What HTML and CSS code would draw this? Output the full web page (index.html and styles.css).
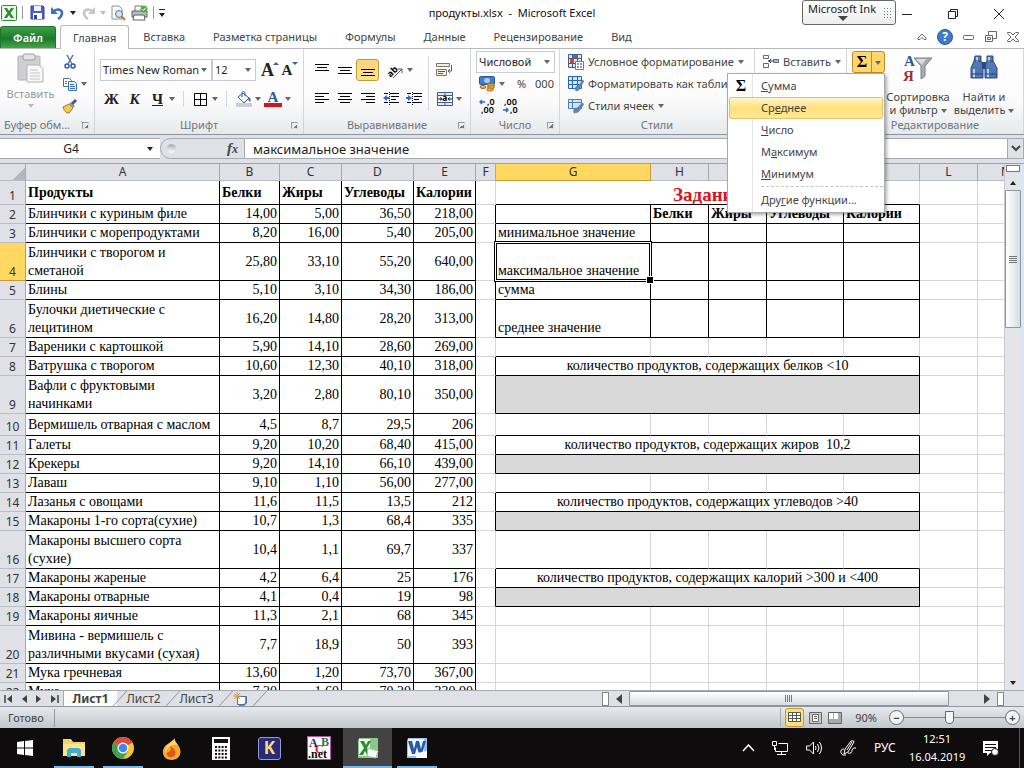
FILE: index.html
```html
<!DOCTYPE html>
<html lang="ru">
<head>
    <meta charset="UTF-8">
    <meta name="viewport" content="width=device-width, initial-scale=1.0">
    <title>продукты.xlsx - Microsoft Excel</title>
    <link rel="stylesheet" href="styles.css">
</head>
<body>
    <header class="titlebar">
        <div class="quick">
            <svg width="16" height="16" viewBox="0 0 16 16"><rect x=".5" y=".5" width="15" height="15" rx="1" fill="#eaf6e4" stroke="#2f8a36"/><path d="M3 3h3l2 3 2-3h3L9.600 8l3.400 5h-3L8 10l-2 3H3l3.400-5z" fill="#2f8a36"/></svg>
            <span class="sep"></span>
            <button class="qb" aria-label="Сохранить"><svg width="15" height="15" viewBox="0 0 15 15"><path d="M1 1h12l1 1v12H1z" fill="#4a5fc4" stroke="#3443a0"/><rect x="4" y="1" width="7" height="5" fill="#eef1fb"/><rect x="3" y="8" width="9" height="6" fill="#fff"/><rect x="4" y="10" width="3" height="4" fill="#3443a0"/></svg></button>
            <button class="qb" aria-label="Отменить"><svg width="14" height="14" viewBox="0 0 14 14"><path d="M3 5c4-3 8-1 8 2 0 2-1 4-4 6" fill="none" stroke="#3f6fc0" stroke-width="2.500"/><path d="M0 1v7h7z" fill="#3f6fc0"/></svg></button>
            <span class="tri dark"></span>
            <button class="qb" aria-label="Вернуть"><svg width="14" height="14" viewBox="0 0 14 14"><path d="M11 5C7 2 3 4 3 7c0 2 1 4 4 6" fill="none" stroke="#c3c6cb" stroke-width="2.500"/><path d="M14 1v7H7z" fill="#c3c6cb"/></svg></button>
            <span class="tri pale"></span>
            <button class="qb" aria-label="Просмотр"><svg width="16" height="16" viewBox="0 0 16 16"><path d="M2 1h7l3 3v10H2z" fill="#fff" stroke="#8b93a0"/><circle cx="9" cy="9" r="3.500" fill="#cfe4f7" stroke="#56718f"/><path d="M11.500 11.500L15 15" stroke="#b5763a" stroke-width="2"/></svg></button>
            <button class="qb" aria-label="Печать"><svg width="17" height="16" viewBox="0 0 17 16"><path d="M4 1h7v6H4z" fill="#fff" stroke="#777"/><path d="M1 6h15v6H1z" fill="#b9bdc3" stroke="#5d6269"/><path d="M3 10h10l1 5H2z" fill="#fff" stroke="#5d6269"/><circle cx="13" cy="4" r="3.500" fill="#58a848"/><path d="M11 4l1.500 1.500L15 2.500" fill="none" stroke="#fff"/></svg></button>
            <span class="sep"></span>
            <button class="custom" aria-label="Настройка панели"><span class="tri dark"></span></button>
        </div>
        <h1 class="title">продукты.xlsx &nbsp;- &nbsp;Microsoft Excel</h1>
        <div class="window-buttons">
            <button aria-label="Свернуть"><svg width="12" height="12"><path d="M1 6.500h10" stroke="#222"/></svg></button>
            <button aria-label="Восстановить"><svg width="12" height="12" fill="none" stroke="#222"><path d="M1.500 3.500h7v7h-7zM3.500 3.500v-2h7v7h-2"/></svg></button>
            <button aria-label="Закрыть"><svg width="12" height="12"><path d="M1 1l10 10M11 1L1 11" stroke="#222"/></svg></button>
        </div>
        <button class="ink">Microsoft Ink<span class="ink-arrow"></span><span class="ink-dots"></span></button>
    </header>

    <nav class="tabs">
        <button class="file">Файл</button>
        <button class="tab active">Главная</button>
        <button class="tab">Вставка</button>
        <button class="tab">Разметка страницы</button>
        <button class="tab">Формулы</button>
        <button class="tab">Данные</button>
        <button class="tab">Рецензирование</button>
        <button class="tab">Вид</button>
        <div class="tab-tools">
            <button aria-label="Свернуть ленту"><svg width="10" height="8" fill="none" stroke="#666"><path d="M1 5l4-4 4 4v1.500H7L5 4.500 3 6.500H1z"/></svg></button>
            <button aria-label="Справка"><svg width="16" height="16"><circle cx="8" cy="8" r="7.500" fill="#3f78cf" stroke="#2b5ba6"/><text x="8" y="12" text-anchor="middle" class="help">?</text></svg></button>
            <button aria-label="Свернуть книгу"><svg width="12" height="8" fill="none" stroke="#666"><rect x=".5" y="2.500" width="10" height="4" rx="1"/></svg></button>
            <button aria-label="Восстановить книгу"><svg width="12" height="12" fill="#fff" stroke="#666"><path d="M3.500.5h8v7h-8z"/><path d="M.5 4.500h7v6h-7z"/><path d="M2.500 6.500h3v2h-3z"/></svg></button>
            <button aria-label="Закрыть книгу"><svg width="12" height="10" fill="none" stroke="#666"><path d="M.5.5h3L6 3 8.500.5h3v1L8 5l3.500 3.500v1h-3L6 7 3.500 9.500h-3v-1L4 5 .5 1.500z"/></svg></button>
        </div>
    </nav>

    <section class="ribbon">
        <div class="group clipboard">
            <div class="content">
                <button class="big disabled"><svg width="28" height="30" viewBox="0 0 28 30"><rect x="1" y="3" width="22" height="24" rx="1" fill="#cfcfd1" stroke="#b4b4b6"/><rect x="6" y="1" width="12" height="6" rx="2" fill="#e4e4e5" stroke="#9c9c9e"/><path d="M10 12h12l4 4v13H10z" fill="#f7f7f8" stroke="#b4b4b6"/><path d="M13 17h8M13 20h10M13 23h10M13 26h10" stroke="#c8c8ca"/></svg><span>Вставить</span><span class="tri pale"></span></button>
                <div class="stack">
                    <button class="ib" aria-label="Вырезать"><svg width="12" height="16" fill="none"><path d="M3 1l5 9M9 1L4 10" stroke="#56779f" stroke-width="1.500"/><circle cx="3" cy="12" r="2" stroke="#2b57b5" stroke-width="1.500"/><circle cx="9" cy="12" r="2" stroke="#2b57b5" stroke-width="1.500"/></svg></button>
                    <div class="line"><button class="ib" aria-label="Копировать"><svg width="16" height="14" stroke="#3d6fb5"><path d="M1.500 1.500h6l2 2v6h-8z" fill="#fff"/><path d="M6.500 4.500h6l2 2v7h-8z" fill="#e3eefb"/><path d="M8 7.500h4M8 9.500h5M8 11.500h5M3 4.500h2M3 6.500h2"/></svg></button><span class="tri"></span></div>
                    <button class="ib" aria-label="Формат по образцу"><svg width="16" height="15"><path d="M1 8l6-3 4 4-4 5c-3 0-5-2-6-6z" fill="#f3c84b" stroke="#a07a20"/><path d="M7 5l2-2 4 4-2 2z" fill="#8f99ab"/><path d="M10 5l4-4" stroke="#3f5e93" stroke-width="3"/></svg></button>
                </div>
            </div>
            <div class="label">Буфер обм...<i class="launch"></i></div>
        </div>

        <div class="group font">
            <div class="content rows">
                <div class="line">
                    <label class="combo family"><select aria-label="Шрифт"><option>Times New Roman</option></select></label>
                    <label class="combo size"><select aria-label="Размер"><option>12</option></select></label>
                    <button class="ib letter grow" aria-label="Увеличить шрифт">A<span class="up"></span></button>
                    <button class="ib letter shrink" aria-label="Уменьшить шрифт">A<span class="down"></span></button>
                </div>
                <div class="line">
                    <button class="ib letter">Ж</button>
                    <button class="ib letter italic">К</button>
                    <button class="ib letter under">Ч</button><span class="tri"></span>
                    <span class="vsep"></span>
                    <button class="ib" aria-label="Границы"><svg width="13" height="13" fill="none" stroke="#000"><path d="M.5.5h12v12H.5zM6.500.5v12M.5 6.500h12"/></svg></button><span class="tri"></span>
                    <span class="vsep"></span>
                    <button class="ib fill" aria-label="Заливка"><svg width="16" height="16"><path d="M2 6l5-4 6 5-5 5z" fill="#eef3fb" stroke="#3f5e93"/><path d="M6 6V2c0-2 3-2 3 0v3" fill="none" stroke="#3f5e93"/><path d="M12 6c3 1 3 3 2 5-1-1-2-2-2-5z" fill="#2f5fb0"/><rect y="12" width="16" height="4" fill="#ccd0d6"/></svg></button><span class="tri"></span>
                    <button class="ib color" aria-label="Цвет текста">A</button><span class="tri"></span>
                </div>
            </div>
            <div class="label">Шрифт<i class="launch"></i></div>
        </div>

        <div class="group align">
            <div class="content">
                <div class="rows">
                    <div class="line">
                        <button class="ib" aria-label="По верхнему краю"><svg width="14" height="14" stroke="#000"><path d="M0 1.500h14M2 4.500h10M0 7.500h14"/></svg></button>
                        <button class="ib" aria-label="По середине"><svg width="14" height="14" stroke="#000"><path d="M0 4.500h14M2 7.500h10M0 10.500h14"/></svg></button>
                        <button class="ib on" aria-label="По нижнему краю"><svg width="14" height="14" stroke="#000"><path d="M0 6.500h14M2 9.500h10M0 12.500h14"/></svg></button>
                        <button class="ib orient" aria-label="Ориентация"><svg width="18" height="17"><text x="0" y="13" transform="rotate(-45 5 10)" class="ab">ab</text><path d="M6 16l9-9M11 7h4v4" fill="none" stroke="#555"/></svg></button><span class="tri"></span>
                    </div>
                    <div class="line">
                        <button class="ib" aria-label="По левому краю"><svg width="14" height="14" stroke="#000"><path d="M0 1.500h14M0 4.500h9M0 7.500h14M0 10.500h9"/></svg></button>
                        <button class="ib" aria-label="По центру"><svg width="14" height="14" stroke="#000"><path d="M0 1.500h14M2 4.500h10M0 7.500h14M2 10.500h10"/></svg></button>
                        <button class="ib" aria-label="По правому краю"><svg width="14" height="14" stroke="#000"><path d="M0 1.500h14M5 4.500h9M0 7.500h14M5 10.500h9"/></svg></button>
                        <button class="ib" aria-label="Уменьшить отступ"><svg width="16" height="14" stroke="#000"><path d="M1 1.500h4M7 1.500h9M8 4.500h8M8 7.500h5M1 10.500h4M7 10.500h9"/><path d="M6.500 0v13" stroke-dasharray="1 1"/><path d="M0 6l4-3v2h2v2H4v2z" fill="#2f6bd0" stroke="none"/></svg></button>
                        <button class="ib" aria-label="Увеличить отступ"><svg width="16" height="14" stroke="#000"><path d="M1 1.500h4M7 1.500h9M8 4.500h8M8 7.500h5M1 10.500h4M7 10.500h9"/><path d="M6.500 0v13" stroke-dasharray="1 1"/><path d="M6 6L2 3v2H0v2h2v2z" fill="#2f6bd0" stroke="none"/></svg></button>
                    </div>
                </div>
                <span class="vsep tall"></span>
                <div class="rows">
                    <button class="ib" aria-label="Перенос текста"><svg width="17" height="16"><path d="M.5 1.500h13v3H.5zM.5 7.500h10v6H.5z" fill="#f3f0dc" stroke="#777"/><path d="M2 9.500h7M2 11.500h5" stroke="#4b6078"/><path d="M15.500 3v6h-3M14 7l-2 2 2 2" fill="none" stroke="#4b6078"/></svg></button>
                    <div class="line"><button class="ib" aria-label="Объединить"><svg width="16" height="15"><path d="M.5.5h15v13H.5z" fill="#dfeaf7" stroke="#3f5e93"/><path d="M1 4h14v6H1z" fill="#fff"/><path d="M.5 3.500h15M.5 10.500h15M8 .5v3M8 10.500v3" stroke="#3f5e93"/><path d="M1 7h4M11 7h4M3 5.500L5 7 3 8.500M13 5.500L11 7l2 1.500" fill="none" stroke="#222"/><text x="5" y="9" class="ab">a</text></svg></button><span class="tri"></span></div>
                </div>
            </div>
            <div class="label">Выравнивание<i class="launch"></i></div>
        </div>

        <div class="group number">
            <div class="content stack">
                <label class="combo format"><select aria-label="Числовой формат"><option>Числовой</option></select></label>
                <div class="line">
                    <button class="ib" aria-label="Денежный формат"><svg width="17" height="16"><rect x=".5" y=".5" width="15" height="8" rx="1" fill="#3f7cc9" stroke="#28559b"/><ellipse cx="8" cy="4.500" rx="3" ry="2.500" fill="#a9cdf3"/><g fill="#f0b440" stroke="#a96b16"><ellipse cx="12" cy="9" rx="3.500" ry="1.500"/><ellipse cx="12" cy="11" rx="3.500" ry="1.500"/><ellipse cx="11" cy="13.500" rx="3.500" ry="1.500"/><ellipse cx="4" cy="11" rx="3" ry="1.500"/></g></svg></button><span class="tri"></span>
                    <button class="ib percent">%</button>
                    <button class="ib">000</button>
                </div>
                <div class="line">
                    <button class="ib digits" aria-label="Увеличить разрядность"><svg width="17" height="16"><path d="M1 4h5M3 2L1 4l2 2" stroke="#2f6bd0" fill="none" stroke-width="1.500"/><text x="8" y="7">,0</text><text x="2" y="15">,00</text></svg></button>
                    <button class="ib digits" aria-label="Уменьшить разрядность"><svg width="17" height="16"><text x="2" y="7">,00</text><path d="M1 12h5M4 10l2 2-2 2" stroke="#2f6bd0" fill="none" stroke-width="1.500"/><text x="8" y="15">,0</text></svg></button>
                </div>
            </div>
            <div class="label">Число<i class="launch"></i></div>
        </div>

        <div class="group styles">
            <div class="content stack">
                <button class="row-button"><svg width="16" height="16"><path d="M.5.5h13v13H.5z" fill="#d9e6f6" stroke="#3f5e93"/><path d="M.5 4.500h13M.5 9.500h13M4.500.5v13M9.500.5v13" stroke="#3f5e93"/><path d="M5 1h4v3H5zM2 5h4v4H2z" fill="#cf4436"/><path d="M7.500 7.500h8v8h-8z" fill="#fff" stroke="#777"/><path d="M9 10h2M12 10h2M9 13h2M12 13h2" stroke="#333"/></svg><span>Условное форматирование</span><i class="tri"></i></button>
                <button class="row-button"><svg width="16" height="16"><path d="M.5.5h13v12H.5z" fill="#d3e5fa" stroke="#2f62ad"/><path d="M.5 4.500h13M.5 8.500h13M4.500.5v12M9.500.5v12" stroke="#2f62ad"/><path d="M8 15c-2-3 0-5 2-5l5-6 1 1-4 7c0 2-2 3-4 3z" fill="#4f87d2" stroke="#8b7840" stroke-width=".5"/></svg><span>Форматировать как таблицу</span></button>
                <button class="row-button"><svg width="16" height="16"><path d="M.5 1.500h13v9H.5z" fill="#d3e5fa" stroke="#4f7cb8"/><path d="M.5 4.500h13M4.500 1.500v9" stroke="#4f7cb8"/><path d="M6 15c-1-3 0-5 3-5l5-5 2 1-4 6c-1 2-3 3-6 3z" fill="#4f87d2" stroke="#8b7840" stroke-width=".5"/></svg><span>Стили ячеек</span><i class="tri"></i></button>
            </div>
            <div class="label">Стили</div>
        </div>

        <div class="group cells">
            <div class="content stack">
                <button class="row-button"><svg width="16" height="14" fill="#fff" stroke="#667"><path d="M.5.500h5v3h-5zM.5 8.500h5v4h-5z"/><path d="M10.500 4.500h5v3h-5z" fill="#9cc0ec"/><path d="M5 6h5M8 4L6 6l2 2" stroke="#222"/></svg><span>Вставить</span><i class="tri"></i></button>
            </div>
            <div class="label"></div>
        </div>

        <div class="group editing">
            <div class="content">
                <div class="autosum">
                    <button class="sum">Σ</button><button class="sum-arrow" aria-label="Другие функции"><i class="tri"></i></button>
                    <div class="menu" role="menu">
                        <button role="menuitem"><b>Σ</b><span><u>С</u>умма</span></button>
                        <button role="menuitem" class="hover"><b></b><span>Ср<u>е</u>днее</span></button>
                        <button role="menuitem"><b></b><span><u>Ч</u>исло</span></button>
                        <button role="menuitem"><b></b><span>М<u>а</u>ксимум</span></button>
                        <button role="menuitem"><b></b><span><u>М</u>инимум</span></button>
                        <hr>
                        <button role="menuitem"><b></b><span>Дру<u>г</u>ие функции...</span></button>
                    </div>
                </div>
                <button class="big"><svg width="30" height="30"><text x="1" y="13" class="sort-a">A</text><text x="0" y="28" class="sort-ya">Я</text><path d="M11 5h18l-7 8v10l-4 3V13z" fill="#a9adb2" stroke="#7b8087"/><path d="M13 6h10l-4 6z" fill="#d9dce0"/></svg><span>Сортировка<br>и фильтр <i class="tri"></i></span></button>
                <button class="big"><svg width="28" height="30"><g fill="#5377b5" stroke="#2c4a84"><path d="M5 3h6v5l2 5v12H1V15l3-7z"/><path d="M17 3h6v5l4 7v10H15V13l2-5z"/></g><path d="M12 9h4v7h-4z" fill="#2c4a84"/><path d="M4 16v8M18 16v8M7 4v5M19 4v5" stroke="#b9d0f2" stroke-width="2"/><path d="M5 8h6M17 8h6M1 21h12M15 21h12" stroke="#24406f"/></svg><span>Найти и<br>выделить <i class="tri"></i></span></button>
            </div>
            <div class="label">Редактирование</div>
        </div>
    </section>

    <div class="formula-bar">
        <input class="name-box" aria-label="Имя" value="G4">
        <span class="name-arrow"><i class="tri dark"></i></span>
        <div class="fx-area"><i class="knob"></i><button class="fx">f<small>x</small></button></div>
        <input class="formula" aria-label="Строка формул" value="максимальное значение">
        <button class="expand" aria-label="Развернуть"><svg width="10" height="8"><path d="M1 1l4 4 4-4" fill="none" stroke="#444" stroke-width="2"/></svg></button>
    </div>

    <main class="workspace">
        <div class="sheet">
            <table class="grid">
                <colgroup><col class="w-num"><col class="w-a"><col class="w-b"><col class="w-c"><col class="w-d"><col class="w-c"><col class="w-f"><col class="w-g"><col class="w-h"><col class="w-h"><col class="w-j"><col class="w-k"><col class="w-h"><col class="w-h"></colgroup>
                <thead>
                    <tr><th class="corner"></th><th>A</th><th>B</th><th>C</th><th>D</th><th>E</th><th>F</th><th class="current">G</th><th>H</th><th>I</th><th>J</th><th>K</th><th>L</th><th>M</th></tr>
                </thead>
                <tbody>
                    <tr class="head first"><th>1</th><td>Продукты</td><td>Белки</td><td>Жиры</td><td>Углеводы</td><td>Калории</td><td></td><td colspan="5" class="task">Задание</td><td></td><td></td></tr>
                    <tr class="boxed names"><th>2</th><td>Блинчики с куриным филе</td><td>14,00</td><td>5,00</td><td>36,50</td><td>218,00</td><td></td><td></td><td>Белки</td><td>Жиры</td><td>Углеводы</td><td>Калории</td><td></td><td></td></tr>
                    <tr class="boxed"><th>3</th><td>Блинчики с морепродуктами</td><td>8,20</td><td>16,00</td><td>5,40</td><td>205,00</td><td></td><td>минимальное значение</td><td></td><td></td><td></td><td></td><td></td><td></td></tr>
                    <tr class="boxed double"><th class="current">4</th><td>Блинчики с творогом и сметаной</td><td>25,80</td><td>33,10</td><td>55,20</td><td>640,00</td><td></td><td class="selected">максимальное значение</td><td></td><td></td><td></td><td></td><td></td><td></td></tr>
                    <tr class="boxed"><th>5</th><td>Блины</td><td>5,10</td><td>3,10</td><td>34,30</td><td>186,00</td><td></td><td>сумма</td><td></td><td></td><td></td><td></td><td></td><td></td></tr>
                    <tr class="boxed double"><th>6</th><td>Булочки диетические с лецитином</td><td>16,20</td><td>14,80</td><td>28,20</td><td>313,00</td><td></td><td>среднее значение</td><td></td><td></td><td></td><td></td><td></td><td></td></tr>
                    <tr class="over"><th>7</th><td>Вареники с картошкой</td><td>5,90</td><td>14,10</td><td>28,60</td><td>269,00</td><td></td><td></td><td></td><td></td><td></td><td></td><td></td><td></td></tr>
                    <tr class="boxed"><th>8</th><td>Ватрушка с творогом</td><td>10,60</td><td>12,30</td><td>40,10</td><td>318,00</td><td></td><td colspan="5" class="question">количество продуктов, содержащих белков &lt;10</td><td></td><td></td></tr>
                    <tr class="boxed double"><th>9</th><td>Вафли с фруктовыми начинками</td><td>3,20</td><td>2,80</td><td>80,10</td><td>350,00</td><td></td><td colspan="5" class="answer"></td><td></td><td></td></tr>
                    <tr class="over roomy"><th>10</th><td>Вермишель отварная с маслом</td><td>4,5</td><td>8,7</td><td>29,5</td><td>206</td><td></td><td></td><td></td><td></td><td></td><td></td><td></td><td></td></tr>
                    <tr class="boxed"><th>11</th><td>Галеты</td><td>9,20</td><td>10,20</td><td>68,40</td><td>415,00</td><td></td><td colspan="5" class="question">количество продуктов, содержащих жиров &nbsp;10,2</td><td></td><td></td></tr>
                    <tr class="boxed"><th>12</th><td>Крекеры</td><td>9,20</td><td>14,10</td><td>66,10</td><td>439,00</td><td></td><td colspan="5" class="answer"></td><td></td><td></td></tr>
                    <tr class="over"><th>13</th><td>Лаваш</td><td>9,10</td><td>1,10</td><td>56,00</td><td>277,00</td><td></td><td></td><td></td><td></td><td></td><td></td><td></td><td></td></tr>
                    <tr class="boxed"><th>14</th><td>Лазанья с овощами</td><td>11,6</td><td>11,5</td><td>13,5</td><td>212</td><td></td><td colspan="5" class="question">количество продуктов, содержащих углеводов &gt;40</td><td></td><td></td></tr>
                    <tr class="boxed"><th>15</th><td>Макароны 1-го сорта(сухие)</td><td>10,7</td><td>1,3</td><td>68,4</td><td>335</td><td></td><td colspan="5" class="answer"></td><td></td><td></td></tr>
                    <tr class="over double"><th>16</th><td>Макароны высшего сорта (сухие)</td><td>10,4</td><td>1,1</td><td>69,7</td><td>337</td><td></td><td></td><td></td><td></td><td></td><td></td><td></td><td></td></tr>
                    <tr class="boxed"><th>17</th><td>Макароны жареные</td><td>4,2</td><td>6,4</td><td>25</td><td>176</td><td></td><td colspan="5" class="question">количество продуктов, содержащих калорий &gt;300 и &lt;400</td><td></td><td></td></tr>
                    <tr class="boxed"><th>18</th><td>Макароны отварные</td><td>4,1</td><td>0,4</td><td>19</td><td>98</td><td></td><td colspan="5" class="answer"></td><td></td><td></td></tr>
                    <tr><th>19</th><td>Макароны яичные</td><td>11,3</td><td>2,1</td><td>68</td><td>345</td><td></td><td></td><td></td><td></td><td></td><td></td><td></td><td></td></tr>
                    <tr class="double"><th>20</th><td>Мивина - вермишель с различными вкусами (сухая)</td><td>7,7</td><td>18,9</td><td>50</td><td>393</td><td></td><td></td><td></td><td></td><td></td><td></td><td></td><td></td></tr>
                    <tr><th>21</th><td>Мука гречневая</td><td>13,60</td><td>1,20</td><td>73,70</td><td>367,00</td><td></td><td></td><td></td><td></td><td></td><td></td><td></td><td></td></tr>
                    <tr><th>22</th><td>Мука</td><td>7,20</td><td>1,60</td><td>70,20</td><td>330,00</td><td></td><td></td><td></td><td></td><td></td><td></td><td></td><td></td></tr>
                </tbody>
            </table>
        </div>
        <div class="vscroll">
            <span class="splitter"></span>
            <button class="vs-arrow" aria-label="Вверх"><i class="tri dark flip"></i></button>
            <div class="vthumb"><i class="grip"></i></div>
            <button class="vs-arrow last" aria-label="Вниз"><i class="tri dark"></i></button>
        </div>
    </main>

    <div class="sheet-bar">
        <div class="sheet-nav">
            <button aria-label="Первый лист"><svg width="10" height="8"><path d="M1 0v8" stroke="#444" stroke-width="1.500"/><path d="M8 0v8L3 4z" fill="#444"/></svg></button>
            <button aria-label="Предыдущий лист"><svg width="6" height="8"><path d="M5 0v8L0 4z" fill="#444"/></svg></button>
            <button aria-label="Следующий лист"><svg width="6" height="8"><path d="M1 0v8l5-4z" fill="#444"/></svg></button>
            <button aria-label="Последний лист"><svg width="10" height="8"><path d="M9 0v8" stroke="#444" stroke-width="1.500"/><path d="M2 0v8l5-4z" fill="#444"/></svg></button>
        </div>
        <button class="sheet-tab active">Лист1</button>
        <button class="sheet-tab">Лист2</button>
        <button class="sheet-tab">Лист3</button>
        <button class="sheet-tab new" aria-label="Новый лист"><svg width="15" height="14"><path d="M4.500 4.500h9v6l-2 2h-7z" fill="#fff" stroke="#4f6ea5"/><path d="M13 5v6l-2 2H6" fill="none" stroke="#4f6ea5" stroke-width="1.500"/><path d="M4 0v8M0 4h8M1 1l6 6M7 1L1 7" stroke="#eb9a3c"/></svg></button>
        <div class="hscroll">
            <span class="hsplit"></span>
            <button aria-label="Влево"><svg width="6" height="10"><path d="M6 0v10L0 5z" fill="#444"/></svg></button>
            <div class="htrack"><div class="hthumb"><i class="grip"></i></div></div>
            <button aria-label="Вправо"><svg width="6" height="10"><path d="M0 0v10l6-5z" fill="#444"/></svg></button>
            <span class="hsplit"></span>
        </div>
    </div>

    <footer class="status">
        <span class="ready">Готово</span>
        <div class="views">
            <button class="on" aria-label="Обычный"><svg width="13" height="11" fill="#fff" stroke="#555"><path d="M.5.5h12v9H.5zM.5 3.500h12M.5 6.500h12M4.500.5v9M8.500.5v9"/></svg></button>
            <button aria-label="Разметка страницы"><svg width="13" height="12"><path d="M.5.500h12v11H.5z" fill="#ccc" stroke="#666"/><path d="M3.500 2.500h6v7h-6z" fill="#fff" stroke="#666"/><path d="M5 4.500h3M5 6.500h3" stroke="#666"/></svg></button>
            <button aria-label="Страничный режим"><svg width="14" height="12"><path d="M.5.500h13v11H.5z" fill="#aaa" stroke="#666"/><path d="M1 1h4v6H1zM6 1h4v6H6z" fill="#fff"/></svg></button>
        </div>
        <span class="percent-text">90%</span>
        <button class="round" aria-label="Уменьшить">−</button>
        <input class="zoom" type="range" min="0" max="100" value="45" aria-label="Масштаб">
        <button class="round" aria-label="Увеличить">+</button>
    </footer>

    <div class="taskbar">
        <button class="app" aria-label="Пуск"><svg width="16" height="16" fill="#fff"><path d="M0 2l7-1v6.500H0zM8 1l8-1v7.500H8zM0 8.500h7V15l-7-1zM8 8.500h8V16l-8-1z"/></svg></button>
        <button class="app open" aria-label="Проводник"><svg width="22" height="20"><path d="M0 1h8l2 3h12v14H0z" fill="#f5d36c"/><path d="M0 6h22v12H0z" fill="#fbe394"/><path d="M4 19v-7l2-2h10l2 2v7h-4v-4H8v4z" fill="#43aecb"/></svg></button>
        <button class="app open" aria-label="Chrome"><svg width="22" height="22"><circle cx="11" cy="11" r="11" fill="#f7c52d"/><path d="M11 11L1.500 5.500A11 11 0 0 1 20.500 5.500z" fill="#dd4b3e"/><path d="M11 11L1.500 5.500A11 11 0 0 0 11 22l5-8z" fill="#3c9f55"/><circle cx="11" cy="11" r="5.500" fill="#fff"/><circle cx="11" cy="11" r="4.300" fill="#4586ee"/></svg></button>
        <button class="app" aria-label="Пламя"><svg width="20" height="24"><path d="M14 1c-3 3 0 5 2 8 4 5 4 14-6 15C3 24 0 19 1 14 3 7 10 7 14 1z" fill="#f3a92f"/><path d="M14 1c-3 3 0 5 2 8-4-1-9 0-13 7C3 8 10 7 14 1z" fill="#fbd56d"/><path d="M8 10c4 2 7 5 5 9-1 3-7 3-8 0-1-2 1-3 3-4 1-1 1-3 0-5z" fill="#e2571e"/></svg></button>
        <button class="app" aria-label="Калькулятор"><svg width="18" height="23"><path d="M0 0h18v23H0z" fill="#fff"/><path d="M2 2h14v4H2z" fill="#111"/><path d="M3 10h12M3 13.500h12M3 17h12M3 20.500h12" stroke="#111" stroke-width="2" stroke-dasharray="2 1.300"/></svg></button>
        <button class="app" aria-label="K"><span class="k-logo">K</span></button>
        <button class="app" aria-label="ABC.net"><svg width="24" height="24" class="abc"><path d="M.5.500h23v23H.5z" fill="#fff" stroke="#c04ab0"/><text x="2" y="11" fill="#1d1d80">A</text><text x="14" y="10" fill="#18803a">B</text><text x="8" y="17" fill="#d02525">C</text><text x="1" y="22" fill="#111">.net</text></svg></button>
        <button class="app open current" aria-label="Excel"><svg width="22" height="22"><path d="M2 1h19v20H1V4z" fill="#8cc88a"/><path d="M2 2h11v17H2z" fill="#f0f9ec"/><path d="M3 4h4l2 4 2-4h3l-4 7 4 7h-4l-2-4-2 4H2l5-7z" fill="#2d8a36"/><path d="M11 11l10 3-2 7-9-2z" fill="#f8fcf6" stroke="#9cc79b"/></svg></button>
        <button class="app open" aria-label="Word"><svg width="22" height="22"><path d="M2 1h19v20H1V4z" fill="#9bc0ea"/><path d="M2 2h16v17H2z" fill="#eff5fc"/><path d="M2 4h4l2 8 2-8h3l2 8 2-8h3l-4 13h-3l-2-7-2 7H6z" fill="#2459ad"/><path d="M11 16l10-2v7H10z" fill="#f8fafd"/></svg></button>
        <div class="tray">
            <button aria-label="Скрытые значки"><svg width="13" height="8"><path d="M1 7l5.500-6L12 7" fill="none" stroke="#fff" stroke-width="1.500"/></svg></button>
            <button aria-label="Сеть"><svg width="17" height="15" fill="none" stroke="#fff"><path d="M6.500 2.500h9v8h-12v-4M9.500 10.500v3M5 13.500h9M.5.5h4v4h-4zM2.500 5v4"/></svg></button>
            <button aria-label="Звук"><svg width="17" height="14" fill="none" stroke="#fff"><path d="M.5 5h3l4-4v12l-4-4h-3zM9.500 5q1 2 0 4M11.500 3q3 4 0 8M13.500 1q4 6 0 12"/></svg></button>
            <button aria-label="Windows Ink"><svg width="17" height="17" fill="none" stroke="#fff"><path d="M5 9L11 1q3-1 3 1L8 12l-4 2zM7 10l5-8M4 9q-4 0-3 4 1 3 5 2M8 13q4 1 4-3 1-3 4-2"/></svg></button>
            <span class="lang">РУС</span>
            <time class="clock">12:51<br>16.04.2019</time>
            <button class="t-note" aria-label="Уведомления"><svg width="18" height="17"><path d="M1 1h15v12H8l-3 3v-3H1z" fill="#fff"/><path d="M3 4.500h11M3 7.500h11M3 10.500h7" stroke="#111"/><circle cx="13" cy="12" r="3.500" fill="#fff" stroke="#111"/></svg></button>
        </div>
    </div>
</body>
</html>
```
FILE: styles.css
```css
* {
    box-sizing: border-box;
}
body {
    display: flex;
    flex-direction: column;
    height: 100vh;
    margin: 0;
    overflow: hidden;
    font: 11px/16px "Noto Sans", sans-serif;
    color: #444;
    background: #fff;
}
button {
    padding: 0;
    margin: 0;
    border: none;
    background: none;
    font: inherit;
    color: inherit;
    white-space: nowrap;
}
svg {
    display: block;
    flex: none;
}
.tri {
    display: inline-block;
    flex: none;
    border: 3px solid transparent;
    border-top: 4px solid #666;
    border-bottom: 0;
    vertical-align: middle;
}
.tri.dark {
    border-top-color: #222;
}
.tri.pale {
    border-top-color: #bbb;
}
.tri.flip {
    transform: rotate(180deg);
}

/* title */
.titlebar {
    display: grid;
    grid-template-columns: 1fr auto 1fr;
    align-items: center;
    height: 25px;
    position: relative;
}
.quick {
    display: flex;
    align-items: center;
    padding: 0 1px;
    height: 22px;
    gap: 3px;
}
.quick .sep {
    width: 1px;
    height: 13px;
    margin: 0 2px;
    background: #999;
}
.qb {
    width: 18px;
    display: flex;
    justify-content: center;
}
.custom {
    display: flex;
    padding-top: 3px;
    border-top: 1px solid #222;
}
.title {
    margin: 0;
    font-size: 11px;
    font-weight: normal;
    color: #111;
}
.window-buttons {
    display: flex;
    justify-content: flex-end;
    padding: 3px 2px 0 0;
}
.window-buttons button {
    width: 46px;
    display: flex;
    justify-content: center;
}
.ink {
    position: absolute;
    top: 0;
    right: 128px;
    width: 94px;
    height: 25px;
    padding: 0 0 8px 5px;
    border: 1px solid #666;
    border-radius: 3px;
    background: linear-gradient(#fff, #eceef0);
    text-align: left;
    color: #222;
}
.ink-arrow {
    position: absolute;
    left: 35px;
    bottom: 3px;
    border: 5px solid transparent;
    border-top-color: #444;
    border-bottom: 0;
}
.ink-dots {
    position: absolute;
    right: 3px;
    top: 6px;
    width: 9px;
    height: 12px;
    background: radial-gradient(#777 1px, transparent 1px) 0 0 / 3px 3px;
}

/* ribbon tabs */
.tabs {
    display: flex;
    height: 24px;
    border-bottom: 1px solid #b6babf;
}
.file {
    width: 56px;
    margin-top: 1px;
    margin-right: 4px;
    border: 1px solid #1d7430;
    border-bottom: 0;
    border-radius: 3px 3px 0 0;
    background: linear-gradient(#3f9f45, #1c7a2c 55%, #48a545);
    color: #fff;
    font-weight: 600;
}
.tab {
    padding: 0 14px;
}
.tab.active {
    height: 24px;
    padding: 0 12px;
    border: 1px solid #b6babf;
    border-bottom: 0;
    border-radius: 3px 3px 0 0;
    background: #fff;
}
.tab-tools {
    display: flex;
    align-items: center;
    gap: 10px;
    margin-left: auto;
    padding-right: 5px;
}
.help {
    font: bold 12px "Open Sans", sans-serif;
    fill: #fff;
}

/* ribbon */
.ribbon {
    display: flex;
    height: 86px;
    border-bottom: 1px solid #8f959d;
    background: linear-gradient(#fff, #fbfbfc 60%, #e7e9ec);
}
.group {
    display: flex;
    flex-direction: column;
    border-right: 1px solid #d3d6da;
}
.content {
    flex: 1;
    display: flex;
}
.label {
    position: relative;
    height: 17px;
    text-align: center;
    color: #70757d;
}
.launch {
    position: absolute;
    right: 5px;
    bottom: 5px;
    width: 7px;
    height: 7px;
    border: 1px solid #999;
    border-right-color: #ddd;
    border-bottom-color: #ddd;
    background: linear-gradient(135deg, transparent 60%, #777 60%);
}
.line {
    display: flex;
    align-items: center;
}
.stack {
    display: flex;
    flex-direction: column;
    padding-top: 2px;
}
.stack > * {
    height: 22px;
}
.rows {
    display: flex;
    flex-direction: column;
    padding-top: 10px;
    gap: 7px;
}
.ib {
    width: 23px;
    height: 22px;
    display: flex;
    flex: none;
    align-items: center;
    justify-content: center;
}
.ib.on {
    border: 1px solid #c29b3c;
    border-radius: 3px;
    background: linear-gradient(#fdd27a, #ffe48a);
}
.vsep {
    width: 1px;
    height: 16px;
    background: #d3d6da;
    margin: 0 4px 0 8px;
}
.vsep.tall {
    height: 54px;
    margin: 8px 4px 0 3px;
}
.big {
    display: flex;
    flex-direction: column;
    align-items: center;
    padding-top: 4px;
    line-height: 13px;
}
.disabled {
    color: #999;
}
.combo {
    position: relative;
    display: flex;
    height: 22px;
}
.combo select {
    appearance: none;
    width: 100%;
    padding: 0 2px;
    border: 1px solid #c8ccd2;
    border-radius: 0;
    background: #fff;
    font: inherit;
    color: #1e1e1e;
}
.combo::after {
    content: "";
    position: absolute;
    right: 5px;
    top: 9px;
    border: 3px solid transparent;
    border-top: 4px solid #666;
    border-bottom: 0;
}
.clipboard {
    width: 95px;
}
.clipboard .big {
    width: 58px;
    padding-left: 3px;
    gap: 4px;
}
.clipboard .label {
    text-align: left;
    padding-left: 4px;
}
.font {
    width: 209px;
}
.font .content {
    padding-left: 5px;
}
.family {
    width: 112px;
}
.size {
    width: 44px;
}
.letter {
    position: relative;
    font: bold 15px "Liberation Serif", serif;
    color: #222;
}
.letter.italic {
    font-style: italic;
}
.letter.under {
    text-decoration: underline;
}
.letter.grow {
    font-size: 18px;
}
.letter.shrink {
    width: 16px;
}
.up, .down {
    position: absolute;
    right: 0;
    top: 3px;
    border: 3px solid transparent;
}
.up {
    border-bottom-color: #3c5f99;
    border-top: 0;
}
.down {
    right: -3px;
    border-top-color: #3c5f99;
    border-bottom: 0;
}
.font .vsep {
    margin: 0 5px 0 8px;
}
.color {
    width: 18px;
    height: 16px;
    margin-left: 3px;
    margin-right: 3px;
    border-bottom: 4px solid #d8131c;
    font: bold 15px "Liberation Serif", serif;
    color: #2f56a0;
}
.align {
    width: 167px;
}
.align .content {
    padding-left: 6px;
}
.orient {
    margin-left: 5px;
}
.ab {
    font: bold 9px "Noto Sans", sans-serif;
}
.number {
    width: 89px;
}
.number .content {
    padding-left: 5px;
}
.format {
    width: 79px;
}
.percent {
    margin-left: 5px;
}
.digits {
    font-size: 9px;
    font-weight: 600;
}
.styles {
    width: 195px;
}
.styles .content {
    padding-left: 8px;
}
.row-button {
    display: flex;
    align-items: center;
    gap: 4px;
}
.cells {
    width: 92px;
}
.cells .content {
    padding-left: 8px;
}
.editing {
    flex: 1;
}
.editing .content {
    padding-left: 5px;
}
.editing .big {
    width: 66px;
}
.editing .big svg {
    margin-bottom: 7px;
}
.sort-a, .sort-ya {
    font: bold 15px "Liberation Serif", serif;
    fill: #2f56a0;
}
.sort-ya {
    fill: #a03030;
}

/* autosum */
.autosum {
    position: relative;
    display: flex;
    align-self: flex-start;
    height: 22px;
    margin-top: 2px;
    border: 1px solid #c08a2c;
    border-radius: 3px;
    background: #ffd76b;
}
.sum {
    width: 19px;
    border-right: 1px solid #c08a2c;
    font: bold 16px "Liberation Serif", serif;
    color: #000;
}
.sum-arrow {
    width: 12px;
}
.menu {
    position: absolute;
    z-index: 10;
    top: 21px;
    right: -1px;
    width: 158px;
    padding: 1px;
    border: 1px solid #a7abb0;
    background: linear-gradient(90deg, #fff 24px, #e2e4e7 24px, #e2e4e7 25px, #fff 25px);
    box-shadow: 2px 2px 3px rgba(0,0,0,0.3);
}
.menu button {
    display: flex;
    align-items: center;
    width: 100%;
    height: 22px;
    border: 1px solid transparent;
    border-radius: 2px;
}
.menu b {
    width: 22px;
    margin-right: 9px;
    font: bold 16px "Liberation Serif", serif;
    color: #000;
}
.menu .hover {
    border-color: #e5c365;
    background: linear-gradient(#fff6d0, #ffe07a 50%, #ffe999);
}
.menu hr {
    margin: 1px 0 2px 32px;
    border: 0;
    border-top: 1px dashed #c5c5c5;
}

/* formula bar */
.formula-bar {
    display: flex;
    height: 29px;
    padding: 3px 0 4px;
    background: #dfe1e6;
    border-bottom: 1px solid #9da2aa;
    font-size: 13px;
}
.name-box, .name-arrow, .formula {
    border: 1px solid #a5a9b0;
    background: #fff;
    border-left: 0;
    border-right: 0;
    min-width: 0;
    font: inherit;
    color: #222;
}
.name-box {
    width: 142px;
    padding: 0;
    text-align: center;
    font-size: 12px;
}
.name-arrow {
    width: 18px;
    padding-left: 5px;
}
.fx-area {
    display: flex;
    align-items: center;
    justify-content: space-between;
    width: 85px;
    padding: 0 6px;
    border: 1px solid #a5a9b0;
    border-radius: 11px 0 0 11px;
}
.knob {
    width: 9px;
    height: 9px;
    border-radius: 5px;
    background: linear-gradient(#aaa, #fff);
}
.fx {
    font: italic bold 15px "Liberation Serif", serif;
}
.fx small {
    font-size: 12px;
}
.formula {
    flex: 1;
    padding: 0 8px;
}
.expand {
    width: 17px;
    display: flex;
    align-items: center;
    justify-content: center;
    border: 1px solid #a5a9b0;
}

/* sheet */
.workspace {
    flex: 1;
    min-height: 0;
    display: flex;
    border-right: 3px solid #dbe6f2;
}
.sheet {
    flex: 1;
    min-width: 0;
    overflow: hidden;
}
.grid {
    width: 1036px;
    table-layout: fixed;
    border-collapse: separate;
    border-spacing: 0;
    font: 14px/18px "Liberation Serif", serif;
    color: #000;
}
.w-num { width: 26px; }
.w-a { width: 194px; }
.w-b { width: 60px; }
.w-c { width: 62px; }
.w-d { width: 72px; }
.w-f { width: 20px; }
.w-g { width: 155px; }
.w-h { width: 58px; }
.w-j { width: 77px; }
.w-k { width: 76px; }
.grid th {
    padding: 0;
    border-right: 1px solid #a5a9b0;
    border-bottom: 1px solid #b9bdc4;
    background: #dfe1e7;
    font: 12px/16px "Noto Sans", sans-serif;
    color: #333;
}
.grid tbody th {
    vertical-align: bottom;
}
.grid .corner {
    background: linear-gradient(135deg, #dfe1e7 70%, #b4b8be 70%);
}
.grid th.current {
    background: #ffd761;
    border-color: #c69a35;
}
.grid td {
    height: 19px;
    padding: 0 2px;
    border-right: 1px solid #d4d6da;
    border-bottom: 1px solid #d4d6da;
    white-space: nowrap;
    vertical-align: bottom;
}
.grid td:nth-child(-n+6) {
    border-color: #000;
    text-align: right;
    vertical-align: middle;
}
.grid td:nth-child(2) {
    text-align: left;
}
.grid .first td {
    height: 24px;
    font-weight: bold;
}
.grid .head td:nth-child(-n+6) {
    text-align: left;
}
.grid .roomy td {
    height: 22px;
}
.grid .double td {
    height: 38px;
}
.grid .double td:nth-child(2) {
    white-space: normal;
}
.boxed td:nth-child(n+8):nth-child(-n+12),
.grid .boxed td:nth-child(7) {
    border-right-color: #000;
}
.boxed td:nth-child(n+8):nth-child(-n+12),
.over td:nth-child(n+8):nth-child(-n+12) {
    border-bottom-color: #000;
}
.grid .boxed td[colspan] ~ td {
    border-color: #d4d6da;
}
.grid .first td.task {
    border-bottom-color: #000;
    font-size: 19px;
    text-align: center;
    color: #d8131c;
}
.grid td.question, .grid td.answer {
    border-color: #000;
    text-align: center;
}
.grid .answer {
    background: #d9d9d9;
}
.names td:nth-child(n+8) {
    font-weight: bold;
}
.selected {
    position: relative;
}
.selected::before {
    content: "";
    position: absolute;
    inset: -2px;
    border: 1px solid #000;
    box-shadow: inset 0 0 0 1px #fff, inset 0 0 0 2px #000;
}
.selected::after {
    content: "";
    position: absolute;
    right: -4px;
    bottom: -4px;
    width: 6px;
    height: 6px;
    border: 1px solid #fff;
    background: #000;
}
.vscroll {
    display: flex;
    flex-direction: column;
    width: 17px;
    background: #e3e5ea;
    border-left: 1px solid #c6c9ce;
}
.splitter {
    height: 7px;
    margin: 1px;
    border: 1px solid #777;
    background: #fff;
}
.vs-arrow {
    height: 17px;
}
.vs-arrow.last {
    margin-top: auto;
}
.vthumb {
    height: 138px;
    display: flex;
    align-items: center;
    justify-content: center;
    border: 1px solid #8f959d;
    border-radius: 1px;
    background: linear-gradient(90deg, #fff, #d8dbe0);
}
.grip {
    width: 8px;
    height: 7px;
    background: repeating-linear-gradient(#777 0 1px, transparent 1px 2px);
}

/* sheet tabs */
.sheet-bar {
    display: flex;
    height: 17px;
    padding-right: 20px;
    border-top: 1px solid #a5a9b0;
    border-bottom: 1px solid #8f959d;
    background: #dfe1e7;
    font-size: 12px;
    line-height: 15px;
}
.sheet-nav {
    width: 64px;
    display: flex;
    align-items: center;
    justify-content: space-around;
    border-right: 1px solid #a5a9b0;
}
.sheet-tab {
    position: relative;
    width: 53px;
    display: flex;
    align-items: center;
    justify-content: center;
}
.sheet-tab::after {
    content: "";
    position: absolute;
    right: -3px;
    top: 0;
    height: 16px;
    border-right: 1px solid #8f959d;
    transform: skewX(-42deg);
}
.sheet-tab.active {
    background: #fff;
    font-weight: bold;
}
.sheet-tab.new {
    width: 34px;
}
.hscroll {
    flex: 1;
    max-width: 402px;
    margin-left: auto;
    display: flex;
    align-items: center;
    gap: 7px;
}
.hsplit {
    width: 7px;
    height: 14px;
    border: 1px solid #888;
    background: #fff;
}
.htrack {
    flex: 1;
    height: 15px;
}
.hthumb {
    width: 92%;
    height: 15px;
    display: flex;
    align-items: center;
    justify-content: center;
    border: 1px solid #8f959d;
    border-radius: 1px;
    background: linear-gradient(#fff, #d8dbe0);
}
.hthumb .grip {
    background: repeating-linear-gradient(90deg, #777 0 1px, transparent 1px 2px);
}

/* status bar */
.status {
    display: flex;
    align-items: center;
    height: 21px;
    padding-right: 4px;
    background: linear-gradient(#e6e9ef, #c2c7c9);
}
.ready {
    width: 55px;
    padding-left: 8px;
    border-right: 1px solid #999;
    line-height: 18px;
}
.views {
    display: flex;
    align-items: center;
    gap: 4px;
    margin-left: auto;
    padding-left: 4px;
    border-left: 1px solid #aaa;
}
.views button {
    padding: 0 1px;
}
.views .on {
    padding: 3px 2px;
    border: 1px solid #c29b3c;
    border-radius: 3px;
    background: #ffdf7d;
}
.percent-text {
    width: 46px;
    text-align: center;
}
.round {
    width: 15px;
    height: 15px;
    border: 1px solid #666;
    border-radius: 8px;
    background: #f3f4f6;
    line-height: 12px;
    font-weight: bold;
}
.zoom {
    appearance: none;
    width: 101px;
    height: 15px;
    margin: 0;
    background: linear-gradient(#888, #888) center / 100% 1px no-repeat;
}
.zoom::-webkit-slider-thumb {
    appearance: none;
    width: 9px;
    height: 13px;
    border: 1px solid #666;
    border-radius: 1px 1px 5px 5px;
    background: #f5f6f8;
}

/* taskbar */
.taskbar {
    display: flex;
    height: 40px;
    padding-right: 4px;
    background: #0f0c0d;
    color: #fff;
}
.app {
    position: relative;
    width: 49px;
    display: flex;
    align-items: center;
    justify-content: center;
}
.app.current {
    background: #454243;
}
.app.open::after {
    content: "";
    position: absolute;
    left: 5px;
    right: 4px;
    bottom: 0;
    height: 2px;
    background: #76b9ed;
}
.app.current::after {
    left: 0;
    right: 0;
}
.k-logo {
    width: 23px;
    height: 23px;
    border: 1px solid #9a9ad8;
    border-radius: 3px;
    background: #262a78;
    color: #f7dd7a;
    font: bold 17px/20px "Open Sans", sans-serif;
}
.abc {
    font: bold 12px "Liberation Serif", serif;
}
.tray {
    display: flex;
    align-items: center;
    margin-left: auto;
    padding-right: 19px;
    border-right: 1px solid #555;
}
.tray button {
    margin-right: 17px;
}
.lang {
    width: 23px;
    margin-right: 12px;
    font-size: 12px;
}
.clock {
    width: 56px;
    margin-right: 17px;
    text-align: center;
    line-height: 18px;
}
.tray .t-note {
    margin: 0;
}
```
